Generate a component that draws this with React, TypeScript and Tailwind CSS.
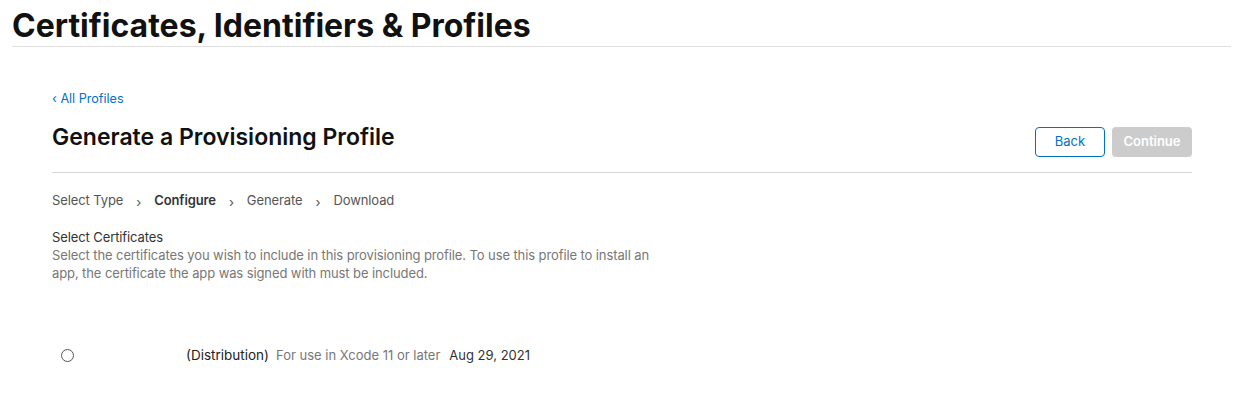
export default function App() {
  const steps = ['Select Type', 'Configure', 'Generate', 'Download']

  return (
    <div className="min-h-[404px] bg-white font-['Inter',sans-serif] text-[#111]">
      <div className="pl-3 pr-[10px] pt-[7px]">
        <h1 className="border-b border-[#e0e0e0] pb-[1px] text-[32px] font-bold leading-[38px]">
          Certificates, Identifiers &amp; Profiles
        </h1>
      </div>

      <div className="ml-[52px] mr-[49px] mt-[38px]">
        <a href="#" className="text-[12.6px] leading-4 text-[#0070c9]">
          ‹ All Profiles
        </a>

        <div className="mt-[14px] flex items-start justify-between border-b border-[#d6d6d6] pb-[15px]">
          <h2 className="text-[23px] font-semibold leading-[28px]">Generate a Provisioning Profile</h2>
          <div className="mt-[4px] flex gap-[7px]">
            <button className="h-[30px] w-[70px] rounded-[4px] border border-[#0070c9] text-[13px] text-[#0070c9]">
              Back
            </button>
            <button className="h-[30px] w-[80px] rounded-[4px] bg-[#cccccc] text-[13px] font-semibold text-white">
              Continue
            </button>
          </div>
        </div>

        <div className="mt-[18px] flex items-center text-[13px] leading-[18px] tracking-[-0.1px] text-[#555]">
          {steps.map((s, i) => (
            <div key={s} className="flex items-center">
              {i > 0 && <span className="mx-[13px] translate-y-[2px] text-[13px] text-[#555]">›</span>}
              <span className={s === 'Configure' ? 'font-semibold text-[#333]' : ''}>{s}</span>
            </div>
          ))}
        </div>

        <div className="mt-[19px] text-[13px] leading-[18px] tracking-[-0.1px]">
          <div className="text-[#333]">Select Certificates</div>
          <p className="w-[610px] text-[#777]">
            Select the certificates you wish to include in this provisioning profile. To use this profile to install an
            app, the certificate the app was signed with must be included.
          </p>
        </div>

        <div className="mt-[64px] flex items-center text-[13px] leading-[18px]">
          <span className="ml-[9px] h-[13px] w-[13px] rounded-full border border-[#555]" />
          <div className="ml-[112px] flex items-baseline gap-[7px]">
            <span className="text-[13.5px] text-[#222]">(Distribution)</span>
            <span className="text-[#777]">For use in Xcode 11 or later</span>
            <span className="ml-[2px] text-[#333]">Aug 29, 2021</span>
          </div>
        </div>
      </div>
    </div>
  )
}
